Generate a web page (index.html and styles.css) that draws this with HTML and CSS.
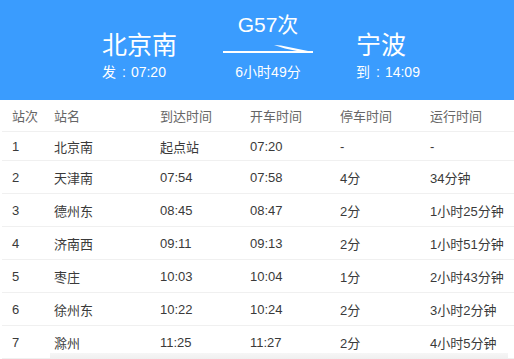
FILE: index.html
```html
<!DOCTYPE html>
<html lang="zh-CN">
<head>
<meta charset="utf-8">
<title>G57次</title>
<link rel="stylesheet" href="styles.css">
</head>
<body>
<header class="hero">
  <div class="end end-from">
    <div class="station">北京南</div>
    <div class="time">发<span class="colon">:</span>07:20</div>
  </div>
  <div class="mid">
    <div class="train">G57次</div>
    <svg class="arrow" width="90" height="9" viewBox="0 0 90 9">
      <rect x="0" y="6" width="90" height="2" fill="#fff"/>
      <polygon points="51,0 58,0.4 90,7 80,7.2 62,3.6" fill="#fff"/>
    </svg>
    <div class="dur">6小时49分</div>
  </div>
  <div class="end end-to">
    <div class="station">宁波</div>
    <div class="time">到<span class="colon">:</span>14:09</div>
  </div>
</header>
<section class="table">
  <div class="row head">
    <span>站次</span><span>站名</span><span>到达时间</span><span>开车时间</span><span>停车时间</span><span>运行时间</span>
  </div>
  <div class="row first">
    <span>1</span><span>北京南</span><span>起点站</span><span>07:20</span><span>-</span><span>-</span>
  </div>
  <div class="row">
    <span>2</span><span>天津南</span><span>07:54</span><span>07:58</span><span>4分</span><span>34分钟</span>
  </div>
  <div class="row">
    <span>3</span><span>德州东</span><span>08:45</span><span>08:47</span><span>2分</span><span>1小时25分钟</span>
  </div>
  <div class="row">
    <span>4</span><span>济南西</span><span>09:11</span><span>09:13</span><span>2分</span><span>1小时51分钟</span>
  </div>
  <div class="row">
    <span>5</span><span>枣庄</span><span>10:03</span><span>10:04</span><span>1分</span><span>2小时43分钟</span>
  </div>
  <div class="row">
    <span>6</span><span>徐州东</span><span>10:22</span><span>10:24</span><span>2分</span><span>3小时2分钟</span>
  </div>
  <div class="row">
    <span>7</span><span>滁州</span><span>11:25</span><span>11:27</span><span>2分</span><span>4小时5分钟</span>
  </div>
</section>
<div class="fade"></div>
</body>
</html>
```
FILE: styles.css
```css
* { box-sizing: border-box; }
html, body { margin: 0; padding: 0; }
body {
  width: 514px;
  height: 359px;
  overflow: hidden;
  position: relative;
  background: #fff;
  font-family: "Liberation Sans", "Noto Sans CJK SC", sans-serif;
}
.hero {
  height: 100px;
  background: #3a9cfe;
  color: #fff;
  display: flex;
  align-items: flex-end;
  padding: 0 0 20px 102px;
}
.end { display: flex; flex-direction: column; }
.station {
  font-size: 25px;
  line-height: 28px;
}
.time {
  font-size: 14px;
  line-height: 16px;
  margin-top: 5px;
  white-space: nowrap;
}
.colon { margin: 0 5px 0 6px; }
.end-from { width: 76px; margin-right: 45px; }
.end-to { margin-left: 43px; }
.mid {
  width: 90px;
  display: flex;
  flex-direction: column;
  align-items: center;
}
.train {
  font-size: 21px;
  line-height: 24px;
}
.arrow { display: block; margin-top: 8px; }
.dur {
  font-size: 14px;
  line-height: 16px;
  margin-top: 10px;
}
.table { padding: 0 0 0 2px; }
.row {
  display: grid;
  grid-template-columns: 42px 106px 90px 90px 90px 1fr;
  align-items: center;
  height: 33px;
  border-bottom: 1.5px solid #f0f0f0;
  font-size: 13px;
  color: #3a3a3a;
}
.row span { padding-left: 10px; white-space: nowrap; }
.row.head { height: 32px; color: #666; }
.row.first { height: 29px; }
.fade {
  position: absolute;
  left: 50px;
  width: 458px;
  top: 353px;
  height: 6px;
  background: linear-gradient(#f6f6f6, #efefef);
}
```
